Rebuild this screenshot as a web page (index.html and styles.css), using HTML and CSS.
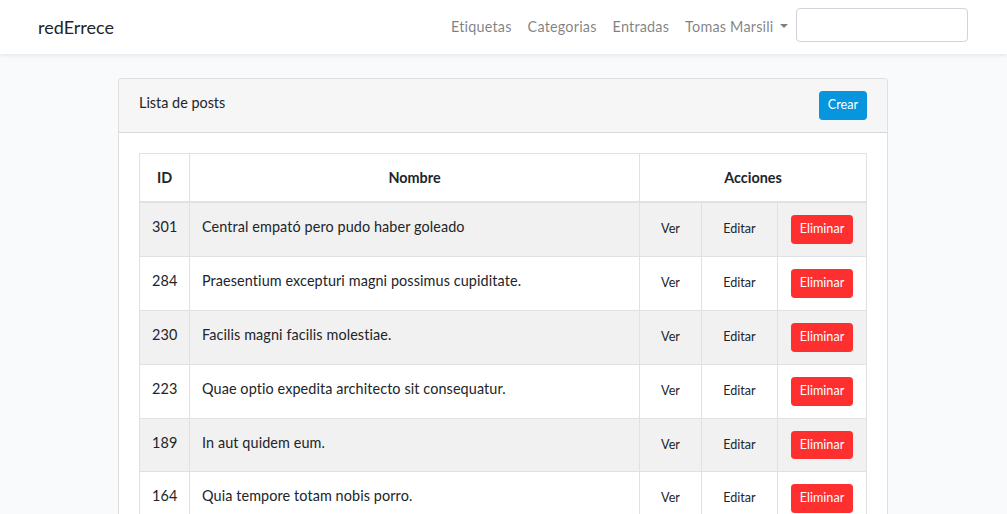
FILE: index.html
```html
<!DOCTYPE html>
<html lang="es">
<head>
<meta charset="utf-8">
<title>redErrece</title>
<link rel="stylesheet" href="styles.css">
</head>
<body>
<nav class="navbar">
  <div class="container nav-inner">
    <a class="brand" href="#">redErrece</a>
    <div class="nav-right">
      <ul class="nav-links">
        <li><a class="nav-link" href="#">Etiquetas</a></li>
        <li><a class="nav-link" href="#">Categorias</a></li>
        <li><a class="nav-link" href="#">Entradas</a></li>
        <li><a class="nav-link dropdown-toggle" href="#">Tomas Marsili</a></li>
      </ul>
      <input class="search" type="text" aria-label="Buscar">
    </div>
  </div>
</nav>
<main class="main">
  <div class="card">
    <div class="card-header">
      <span class="card-title">Lista de posts</span>
      <a class="btn btn-sm btn-primary" href="#">Crear</a>
    </div>
    <div class="card-body">
      <table class="table">
        <colgroup>
          <col class="c-id">
          <col>
          <col class="c-ver">
          <col class="c-edit">
          <col class="c-del">
        </colgroup>
        <thead>
          <tr>
            <th>ID</th>
            <th>Nombre</th>
            <th colspan="3">Acciones</th>
          </tr>
        </thead>
        <tbody>
          <tr>
            <td>301</td><td>Central empató pero pudo haber goleado</td>
            <td class="act"><a class="btn btn-sm" href="#">Ver</a></td>
            <td class="act"><a class="btn btn-sm" href="#">Editar</a></td>
            <td class="act"><button class="btn btn-sm btn-danger">Eliminar</button></td>
          </tr>
          <tr>
            <td>284</td><td>Praesentium excepturi magni possimus cupiditate.</td>
            <td class="act"><a class="btn btn-sm" href="#">Ver</a></td>
            <td class="act"><a class="btn btn-sm" href="#">Editar</a></td>
            <td class="act"><button class="btn btn-sm btn-danger">Eliminar</button></td>
          </tr>
          <tr>
            <td>230</td><td>Facilis magni facilis molestiae.</td>
            <td class="act"><a class="btn btn-sm" href="#">Ver</a></td>
            <td class="act"><a class="btn btn-sm" href="#">Editar</a></td>
            <td class="act"><button class="btn btn-sm btn-danger">Eliminar</button></td>
          </tr>
          <tr>
            <td>223</td><td>Quae optio expedita architecto sit consequatur.</td>
            <td class="act"><a class="btn btn-sm" href="#">Ver</a></td>
            <td class="act"><a class="btn btn-sm" href="#">Editar</a></td>
            <td class="act"><button class="btn btn-sm btn-danger">Eliminar</button></td>
          </tr>
          <tr>
            <td>189</td><td>In aut quidem eum.</td>
            <td class="act"><a class="btn btn-sm" href="#">Ver</a></td>
            <td class="act"><a class="btn btn-sm" href="#">Editar</a></td>
            <td class="act"><button class="btn btn-sm btn-danger">Eliminar</button></td>
          </tr>
          <tr>
            <td>164</td><td>Quia tempore totam nobis porro.</td>
            <td class="act"><a class="btn btn-sm" href="#">Ver</a></td>
            <td class="act"><a class="btn btn-sm" href="#">Editar</a></td>
            <td class="act"><button class="btn btn-sm btn-danger">Eliminar</button></td>
          </tr>
          <tr>
            <td>152</td><td>Voluptatem quia sed aut.</td>
            <td class="act"><a class="btn btn-sm" href="#">Ver</a></td>
            <td class="act"><a class="btn btn-sm" href="#">Editar</a></td>
            <td class="act"><button class="btn btn-sm btn-danger">Eliminar</button></td>
          </tr>
        </tbody>
      </table>
    </div>
  </div>
</main>
</body>
</html>
```
FILE: styles.css
```css
* { box-sizing: border-box; }
html, body { margin: 0; }
body {
  font-family: "Lato", "Noto Sans", sans-serif;
  font-size: 14.4px;
  line-height: 1.6;
  color: #212529;
  background: #f8fafc;
}
a { text-decoration: none; }

.navbar {
  background: #fff;
  padding: 8px 1px 8px 0;
  box-shadow: 0 2px 4px rgba(0, 0, 0, 0.075);
}
.container {
  width: 930px;
  margin: 0 auto;
}
.nav-inner {
  display: flex;
  align-items: center;
  justify-content: space-between;
}
.brand {
  font-size: 18px;
  padding: 5px 0;
  color: #212529;
  line-height: 28px;
}
.nav-right {
  display: flex;
  align-items: flex-start;
  align-self: stretch;
}
.nav-links {
  list-style: none;
  margin: 0;
  padding: 0;
  display: flex;
}
.nav-link {
  display: block;
  padding: 8px;
  line-height: 22px;
  color: rgba(0, 0, 0, 0.5);
  letter-spacing: 0.2px;
}
.dropdown-toggle::after {
  content: "";
  display: inline-block;
  margin-left: 0.45em;
  vertical-align: 0.255em;
  border-top: 0.3em solid;
  border-right: 0.3em solid transparent;
  border-left: 0.3em solid transparent;
}
.search {
  width: 172px;
  height: 34px;
  border: 1px solid #ced4da;
  border-radius: 4px;
  background: #fff;
  font: inherit;
}

.main {
  padding: 24px 1px 24px 0;
}
.card {
  width: 770px;
  margin: 0 auto;
  background: #fff;
  border: 1px solid rgba(0, 0, 0, 0.125);
  border-radius: 4px;
}
.card-header {
  display: flex;
  justify-content: space-between;
  align-items: flex-start;
  padding: 12px 20px;
  background: #f6f6f6;
  border-bottom: 1px solid rgba(0, 0, 0, 0.125);
  border-radius: 3px 3px 0 0;
}
.card-body {
  padding: 20px;
}

.btn {
  display: inline-block;
  font-family: inherit;
  font-weight: 400;
  text-align: center;
  color: #212529;
  background: transparent;
  border: 1px solid transparent;
  cursor: pointer;
}
.btn-sm {
  font-size: 12.6px;
  line-height: 1.5;
  padding: 4px 8px;
  border-radius: 3.2px;
}
.btn-primary {
  background: #0795dd;
  border-color: #0795dd;
  color: #fff;
}
.btn-danger {
  background: #fe302f;
  border-color: #fe302f;
  color: #fff;
}

.table {
  width: 100%;
  border-collapse: collapse;
  table-layout: fixed;
}
.c-id { width: 50px; }
.c-ver { width: 62px; }
.c-edit { width: 76px; }
.c-del { width: 89px; }
.table th,
.table td {
  padding: 12px;
  border: 1px solid #dee2e6;
  vertical-align: top;
  text-align: left;
}
.table td {
  letter-spacing: 0.1px;
}
.table th {
  text-align: center;
  font-weight: 700;
  border-bottom-width: 2px;
}
.table td.act {
  text-align: center;
  white-space: nowrap;
  letter-spacing: 0;
}
.table tbody tr:nth-child(odd) {
  background: #f1f1f1;
}
```
